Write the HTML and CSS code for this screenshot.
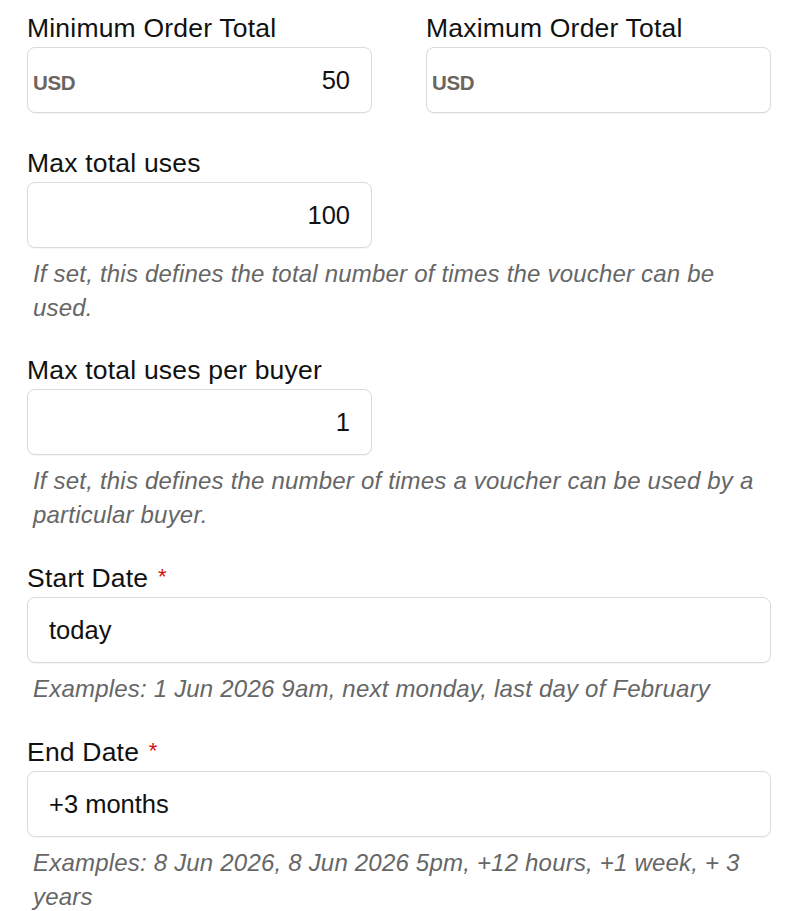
FILE: index.html
```html
<!DOCTYPE html>
<html lang="en">
<head>
<meta charset="utf-8">
<title>Voucher limits</title>
<link rel="stylesheet" href="styles.css">
</head>
<body>
<form class="form">
  <div class="row">
    <div class="field plain">
      <label class="label">Minimum Order Total</label>
      <div class="input money">
        <span class="prefix">USD</span>
        <span class="value num">50</span>
      </div>
    </div>
    <div class="field plain">
      <label class="label">Maximum Order Total</label>
      <div class="input money">
        <span class="prefix">USD</span>
        <span class="value num"></span>
      </div>
    </div>
  </div>

  <div class="row">
    <div class="field wide">
      <label class="label">Max total uses</label>
      <div class="input half">
        <span class="value num">100</span>
      </div>
      <p class="help">If set, this defines the total number of times the voucher can be used.</p>
    </div>
  </div>

  <div class="row">
    <div class="field wide">
      <label class="label">Max total uses per buyer</label>
      <div class="input half">
        <span class="value num">1</span>
      </div>
      <p class="help">If set, this defines the number of times a voucher can be used by a particular buyer.</p>
    </div>
  </div>

  <div class="field">
    <label class="label">Start Date <span class="req">*</span></label>
    <div class="input">
      <span class="value">today</span>
    </div>
    <p class="help">Examples: 1 Jun 2026 9am, next monday, last day of February</p>
  </div>

  <div class="field">
    <label class="label">End Date <span class="req">*</span></label>
    <div class="input">
      <span class="value">+3 months</span>
    </div>
    <p class="help">Examples: 8 Jun 2026, 8 Jun 2026 5pm, +12 hours, +1 week, + 3 years</p>
  </div>
</form>
</body>
</html>
```

FILE: styles.css
```css
html, body {
  margin: 0;
  padding: 0;
  background: #ffffff;
}

body {
  font-family: "Liberation Sans", Arial, sans-serif;
  color: #111111;
}

.form {
  width: 744px;
  padding: 12px 0 0 27px;
  display: flex;
  flex-direction: column;
  gap: 29px;
}

.row {
  display: grid;
  grid-template-columns: 1fr 1fr;
  column-gap: 54px;
}

.field {
  display: flex;
  flex-direction: column;
}

.field.wide {
  grid-column: 1 / span 2;
}

.field.plain {
  padding-bottom: 5px;
}

.label {
  display: block;
  font-size: 26.5px;
  line-height: 32px;
  letter-spacing: 0.2px;
  margin-bottom: 3px;
  color: #111111;
}

.req {
  color: #d40f0f;
  font-size: 22px;
  vertical-align: 3px;
  margin-left: 2px;
}

.input {
  box-sizing: border-box;
  height: 66px;
  border: 1px solid #dadada;
  border-radius: 8px;
  background: #ffffff;
  box-shadow: 0 1px 1px rgba(0, 0, 0, 0.04);
  display: flex;
  align-items: center;
  padding: 0 21px 0 21px;
  font-size: 25.5px;
  color: #111111;
}

.input.half {
  width: 345px;
}

.input.money {
  padding-left: 5px;
}

.prefix {
  font-size: 20.5px;
  font-weight: bold;
  color: #6d645e;
  letter-spacing: -0.4px;
  margin-top: 5px;
}

.value {
  flex: 1;
}

.value.num {
  text-align: right;
}

.help {
  margin: 9px 0 0 0;
  padding-left: 6px;
  font-size: 24px;
  line-height: 34px;
  letter-spacing: 0.2px;
  font-style: italic;
  color: #666666;
}
```
